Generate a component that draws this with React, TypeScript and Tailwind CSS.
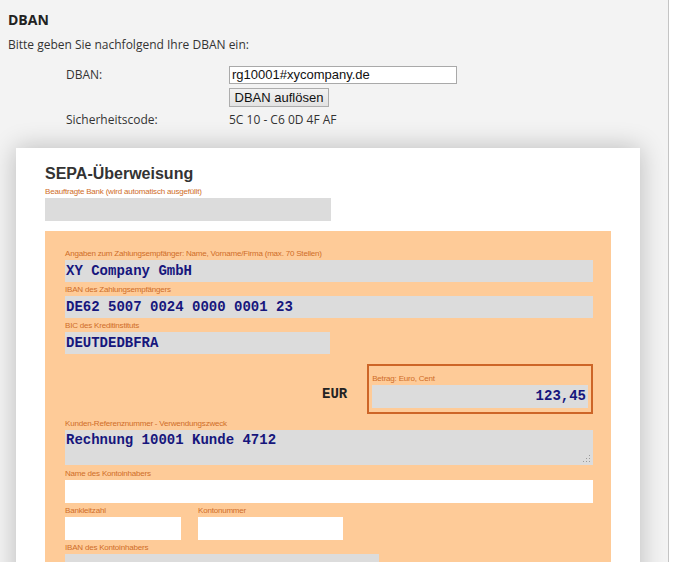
import { FC, ReactNode } from "react";

// Small orange caption above each field
const Caption: FC<{ children: ReactNode; className?: string }> = ({ children, className = "" }) => (
  <div
    className={`flex h-[14px] items-end pb-[2px] font-['Liberation_Sans',Arial,sans-serif] text-[8px] leading-[9px] tracking-[-0.2px] text-[#cf6d28] ${className}`}
  >
    {children}
  </div>
);

// Grey read-only field with mono text
const Field: FC<{ value?: string; className?: string; white?: boolean; right?: boolean }> = ({
  value = "",
  className = "",
  white = false,
  right = false,
}) => (
  <div
    className={`flex h-[22px] items-center px-[1px] font-['Liberation_Mono','Courier_New',monospace] text-[14px] font-bold text-[#16167c] ${
      white ? "bg-white" : "bg-[#dcdcdc]"
    } ${right ? "justify-end pr-[2px]" : ""} ${className}`}
  >
    {value}
  </div>
);

const App: FC = () => {
  return (
    <div className="flex min-h-[562px] w-[674px] overflow-hidden bg-white">
      <div className="h-[562px] w-[669px] overflow-hidden border-r border-[#c4c4c4] bg-[#f3f3f3]">
        {/* DBAN lookup */}
        <section className="px-2 pt-[11px] font-['Open_Sans',sans-serif] text-[#333]">
          <h2 className="text-[14px] font-bold leading-[18px] text-[#222]">DBAN</h2>
          <p className="mt-[8px] text-[12px] leading-[16px]">Bitte geben Sie nachfolgend Ihre DBAN ein:</p>

          <div className="mt-[13px] grid grid-cols-[163px_1fr] items-center gap-y-[4px] pl-[58px] text-[12px]">
            <span>DBAN:</span>
            <input
              readOnly
              value="rg10001#xycompany.de"
              className="h-[18px] w-[228px] border border-[#a9a9a9] bg-white px-[2px] font-['Liberation_Sans',Arial,sans-serif] text-[13px] text-[#111] outline-none"
            />
            <span />
            <button className="h-[19px] w-[100px] border border-[#adadad] bg-gradient-to-b from-[#f2f2f2] to-[#e2e2e2] font-['Liberation_Sans',Arial,sans-serif] text-[13px] leading-[17px] text-[#111]">
              DBAN auflösen
            </button>
            <span>Sicherheitscode:</span>
            <span>5C 10 - C6 0D 4F AF</span>
          </div>
        </section>

        {/* Transfer form card */}
        <div className="ml-[16px] mt-[19px] h-[500px] w-[624px] bg-white pl-[29px] pt-[16px] shadow-[0_0_24px_rgba(0,0,0,0.24)]">
          <h1 className="font-['Liberation_Sans',Arial,sans-serif] text-[16px] font-bold leading-[20px] text-[#333]">
            SEPA-Überweisung
          </h1>
          <Caption className="h-[14px]">Beauftragte Bank (wird automatisch ausgefüllt)</Caption>
          <Field className="h-[23px] w-[286px]" />

          <div className="mt-[10px] w-[566px] bg-[#fecb98] pb-6 pl-[20px] pr-[18px] pt-[15px]">
            <Caption>Angaben zum Zahlungsempfänger: Name, Vorname/Firma (max. 70 Stellen)</Caption>
            <Field value="XY Company GmbH" />
            <Caption>IBAN des Zahlungsempfängers</Caption>
            <Field value="DE62 5007 0024 0000 0001 23" />
            <Caption>BIC des Kreditinstituts</Caption>
            <Field value="DEUTDEDBFRA" className="w-[265px]" />

            <div className="mt-[10px] flex items-end">
              <span className="mb-[9px] ml-[257px] font-['Liberation_Mono','Courier_New',monospace] text-[14px] font-bold text-[#222]">
                EUR
              </span>
              <div className="ml-[20px] h-[50px] w-[226px] border-2 border-[#cd6527] px-[3px] pt-[5px]">
                <Caption>Betrag: Euro, Cent</Caption>
                <Field value="123,45" right className="h-[23px]" />
              </div>
            </div>

            <Caption className="h-[16px]">Kunden-Referenznummer - Verwendungszweck</Caption>
            <div className="relative">
              <textarea
                readOnly
                defaultValue="Rechnung 10001 Kunde 4712"
                className="block h-[35px] w-full resize-none bg-[#dcdcdc] px-[1px] py-[1px] font-['Liberation_Mono','Courier_New',monospace] text-[14px] font-bold leading-[18px] text-[#16167c] outline-none"
              />
              {/* resize grip */}
              <svg className="absolute bottom-[2px] right-[2px]" width="8" height="8" viewBox="0 0 8 8" fill="#9a9a9a">
                <rect x="6" y="0" width="1" height="1" />
                <rect x="6" y="3" width="1" height="1" />
                <rect x="3" y="3" width="1" height="1" />
                <rect x="6" y="6" width="1" height="1" />
                <rect x="3" y="6" width="1" height="1" />
                <rect x="0" y="6" width="1" height="1" />
              </svg>
            </div>
            <Caption className="h-[15px]">Name des Kontoinhabers</Caption>
            <Field white className="h-[23px]" />

            <div className="flex gap-[17px]">
              <div>
                <Caption className="h-[13px]">Bankleitzahl</Caption>
                <Field white className="h-[23px] w-[116px]" />
              </div>
              <div>
                <Caption className="h-[13px]">Kontonummer</Caption>
                <Field white className="h-[23px] w-[145px]" />
              </div>
            </div>

            <Caption>IBAN des Kontoinhabers</Caption>
            <Field className="w-[314px]" />
          </div>
        </div>
      </div>
    </div>
  );
};

export default App;
